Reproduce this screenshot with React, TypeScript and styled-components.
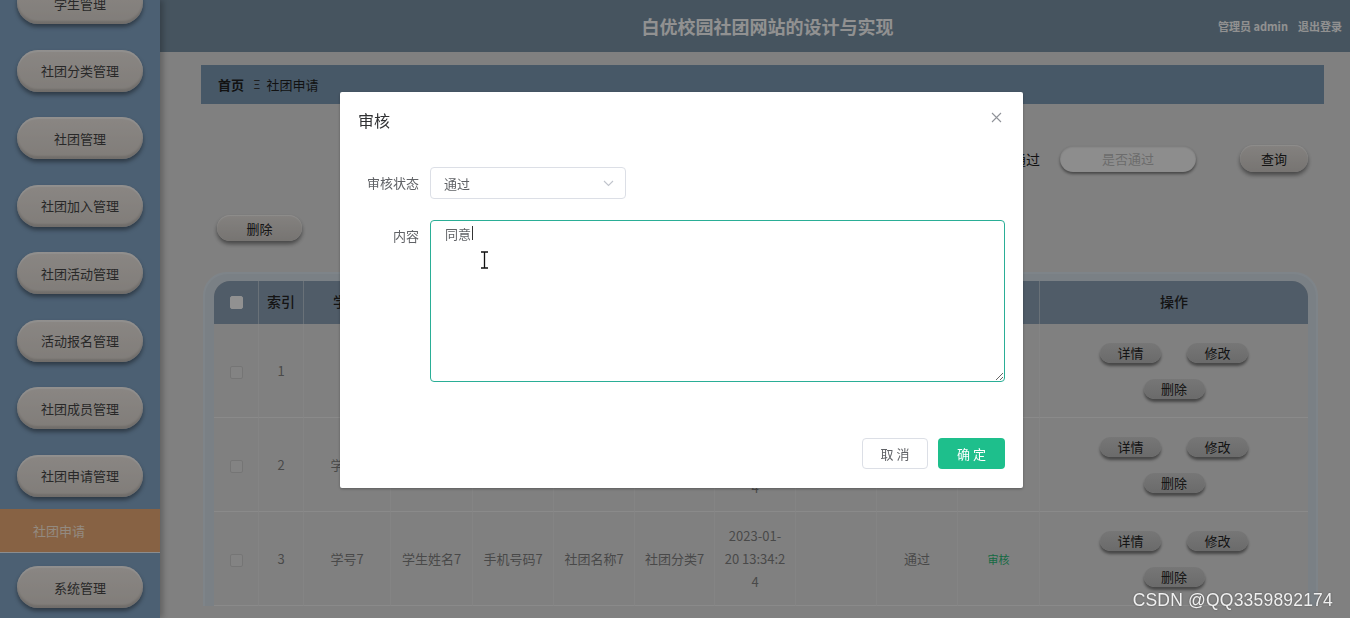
import React from "react";
import styled, { createGlobalStyle } from "styled-components";

const GlobalStyle = createGlobalStyle`
  * { box-sizing: border-box; }
  html, body { margin: 0; padding: 0; width: 100%; height: 100%; overflow: hidden; }
  body { font-family: "Noto Sans CJK SC", "Noto Sans", "Liberation Sans", sans-serif; color: #333; }
  #root { height: 100%; }
`;

const menu = ["学生管理", "社团分类管理", "社团管理", "社团加入管理", "社团活动管理", "活动报名管理", "社团成员管理", "社团申请管理"];

const rows = [
	{ id: 1, no: "11", name: "学生姓名9", phone: "手机号码9", club: "社团名称9", type: "社团分类9", status: "通过" },
	{ id: 2, no: "学号8", name: "学生姓名8", phone: "手机号码8", club: "社团名称8", type: "社团分类8", status: "通过" },
	{ id: 3, no: "学号7", name: "学生姓名7", phone: "手机号码7", club: "社团名称7", type: "社团分类7", status: "通过" },
];

const columns = ["索引", "学号", "学生姓名", "手机号码", "社团名称", "社团分类", "申请时间", "审核回复", "是否通过", "审核", "操作"];
const widths = [45, 45, 87, 82, 81, 81, 80, 81, 81, 81, 82, 268];

function App() {
	return (
		<Page>
			<GlobalStyle />
			<Sidebar>
				{/* the menu is scrolled down a little */}
				<Menu>
					{menu.map((item) => (
						<MenuItem key={item}>
							<MenuButton>{item}</MenuButton>
						</MenuItem>
					))}
					<SubItem>社团申请</SubItem>
					<MenuItem>
						<MenuButton>系统管理</MenuButton>
					</MenuItem>
				</Menu>
			</Sidebar>
			<Main>
				<Header>
					<span />
					<Title>白优校园社团网站的设计与实现</Title>
					<UserBox>
						<span>管理员 admin</span>
						<span>退出登录</span>
					</UserBox>
				</Header>
				<Content>
					<Breadcrumb>
						<b>首页</b>
						<Separator>Ξ</Separator>
						<span>社团申请</span>
					</Breadcrumb>
					<SearchRow>
						<SearchGroup>
							<SearchLabel>社团名称</SearchLabel>
							<SearchInput>社团名称</SearchInput>
						</SearchGroup>
						<SearchGroup>
							<SearchLabel>是否通过</SearchLabel>
							<SearchInput>是否通过</SearchInput>
						</SearchGroup>
						<PillButton $w={68} $h={27}>查询</PillButton>
					</SearchRow>
					<Toolbar>
						<PillButton $w={85} $h={26}>删除</PillButton>
					</Toolbar>
					<TableBox>
						<Table>
							<colgroup>
								{widths.map((w, i) => (
									<col key={i} style={{ width: w }} />
								))}
							</colgroup>
							<thead>
								<tr>
									<Th>
										<Check $filled />
									</Th>
									{columns.map((c) => (
										<Th key={c}>{c}</Th>
									))}
								</tr>
							</thead>
							<tbody>
								{rows.map((r) => (
									<tr key={r.id}>
										<Td>
											<Check />
										</Td>
										<Td>{r.id}</Td>
										<Td>{r.no}</Td>
										<Td>{r.name}</Td>
										<Td>{r.phone}</Td>
										<Td>{r.club}</Td>
										<Td>{r.type}</Td>
										<Td>
											<DateText>
												2023-01-
												<br />
												20 13:34:2
												<br />4
											</DateText>
										</Td>
										<Td />
										<Td>{r.status}</Td>
										<Td>
											<AuditLink>审核</AuditLink>
										</Td>
										<Td>
											<Ops>
												<OpLine>
													<OpButton>详情</OpButton>
													<OpButton>修改</OpButton>
												</OpLine>
												<OpButton>删除</OpButton>
											</Ops>
										</Td>
									</tr>
								))}
							</tbody>
						</Table>
					</TableBox>
				</Content>
			</Main>

			<Mask />
			<DialogWrap>
				<Dialog>
					<DialogHeader>
						<DialogTitle>审核</DialogTitle>
						<CloseButton>
							<svg width="11" height="11" viewBox="0 0 11 11">
								<path d="M1 1 L10 10 M10 1 L1 10" stroke="#909399" strokeWidth="1.1" />
							</svg>
						</CloseButton>
					</DialogHeader>
					<DialogBody>
						<FormItem $gap={21}>
							<FormLabel>审核状态</FormLabel>
							<Select>
								<span>通过</span>
								<svg width="11" height="7" viewBox="0 0 11 7">
									<path d="M1 1 L5.5 5.5 L10 1" stroke="#c0c4cc" strokeWidth="1.1" fill="none" />
								</svg>
							</Select>
						</FormItem>
						<FormItem $gap={22}>
							<FormLabel>内容</FormLabel>
							<AreaWrap>
								<TextArea defaultValue="同意" />
								<Caret />
								<Pointer width="9" height="18" viewBox="0 0 9 18">
									<path d="M1 1 H8 M4.5 1 V17 M1 17 H8" stroke="#111" strokeWidth="1.3" fill="none" />
								</Pointer>
							</AreaWrap>
						</FormItem>
					</DialogBody>
					<DialogFooter>
						<PlainButton>取 消</PlainButton>
						<PrimaryButton>确 定</PrimaryButton>
					</DialogFooter>
				</Dialog>
			</DialogWrap>
			<Watermark>CSDN @QQ3359892174</Watermark>
		</Page>
	);
}

export default App;

const Page = styled.div`
	display: flex;
	width: 100%;
	height: 100%;
	background: #d6d6d6;
`;

const Sidebar = styled.aside`
	flex: none;
	width: 160px;
	height: 100%;
	overflow: hidden;
	background: #7fa0c0;
	box-shadow: 3px 0 6px rgba(0, 0, 0, 0.25);
	position: relative;
	z-index: 1;
`;

const Menu = styled.nav`
	display: flex;
	flex-direction: column;
	margin-top: -31px;
`;

const MenuItem = styled.div`
	display: flex;
	justify-content: center;
	padding: 13px 0 12.5px;
`;

const MenuButton = styled.div`
	width: 126px;
	height: 42px;
	border-radius: 21px;
	display: flex;
	align-items: center;
	justify-content: center;
	font-size: 13px;
	color: #444;
	background: linear-gradient(#e6e0db, #d6d0ca);
	box-shadow: inset 0 2px 1px rgba(255, 255, 255, 0.5), inset 0 -3px 2px rgba(0, 0, 0, 0.12),
		0 3px 4px rgba(0, 0, 0, 0.4);
`;

const SubItem = styled.div`
	height: 44px;
	display: flex;
	align-items: center;
	padding-left: 33px;
	font-size: 13px;
	color: #f6e6d6;
	background: #e1a372;
	border-bottom: 1px solid #e8ecef;
`;

const Main = styled.div`
	flex: 1;
	min-width: 0;
	display: flex;
	flex-direction: column;
`;

const Header = styled.header`
	flex: none;
	height: 52px;
	display: grid;
	grid-template-columns: 1fr auto 1fr;
	align-items: center;
	padding: 0 8px 0 33px;
	background: #758c9e;
`;

const Title = styled.h1`
	margin: 0;
	font-size: 18px;
	font-weight: 700;
	color: #f2f2f2;
`;

const UserBox = styled.div`
	justify-self: end;
	display: flex;
	gap: 10px;
	font-size: 11px;
	font-weight: 700;
	color: #f2f2f2;
`;

const Content = styled.div`
	flex: 1;
	display: flex;
	flex-direction: column;
	padding: 13px 26px 0 41px;
`;

const Breadcrumb = styled.div`
	height: 39px;
	display: flex;
	align-items: center;
	padding-left: 17px;
	font-size: 13px;
	color: #1e1e1e;
	background: #7793ac;
`;

const Separator = styled.span`
	margin: 0 6px 0 9px;
	font-family: "DejaVu Sans", sans-serif;
	font-size: 12px;
	color: #333;
`;

const SearchRow = styled.div`
	margin-top: 41px;
	height: 27px;
	display: flex;
	align-items: center;
	justify-content: flex-end;
	gap: 44px;
	padding-right: 16px;
`;

const SearchGroup = styled.div`
	display: flex;
	align-items: center;
	gap: 20px;
`;

const SearchLabel = styled.span`
	font-size: 14px;
	color: #1e1e1e;
`;

const SearchInput = styled.div`
	width: 136px;
	height: 26px;
	border-radius: 13px;
	display: flex;
	align-items: center;
	justify-content: center;
	font-size: 13px;
	color: #b4b4b4;
	background: #ececec;
	box-shadow: inset 0 1px 2px rgba(0, 0, 0, 0.15), 0 2px 3px rgba(0, 0, 0, 0.45);
`;

const PillButton = styled.div<{ $w: number; $h: number }>`
	width: ${(p) => p.$w}px;
	height: ${(p) => p.$h}px;
	border-radius: ${(p) => p.$h / 2}px;
	display: flex;
	align-items: center;
	justify-content: center;
	font-size: 13px;
	color: #222;
	background: linear-gradient(#dcd8d4, #c6c2be);
	box-shadow: inset 0 1px 1px rgba(255, 255, 255, 0.5), 0 3px 4px rgba(0, 0, 0, 0.45);
`;

const Toolbar = styled.div`
	margin-top: 43px;
	padding-left: 16px;
	display: flex;
`;

const TableBox = styled.div`
	margin: 31px 0 0 2px;
	width: 1115px;
	padding: 7px 8px 0 9px;
	border: 2px solid #d3dde5;
	border-bottom: none;
	border-radius: 24px 24px 0 0;
	background: #ccd6de;
`;

const Table = styled.table`
	width: 1094px;
	border-collapse: separate;
	border-spacing: 0;
	table-layout: fixed;
	background: #d6d6d6;
	border-radius: 16px 16px 0 0;
`;

const Th = styled.th`
	height: 43px;
	padding: 0 0 4px;
	font-size: 14px;
	font-weight: 500;
	color: #222;
	background: #8599ad;
	border-right: 1px solid rgba(255, 255, 255, 0.35);
	&:first-child {
		border-top-left-radius: 16px;
	}
	&:last-child {
		border-top-right-radius: 16px;
		border-right: none;
	}
`;

const Td = styled.td`
	height: 94px;
	padding: 0 4px;
	text-align: center;
	font-size: 13px;
	color: #7a7a7a;
	border-right: 1px solid #dcdcdc;
	border-bottom: 1px solid #e6e6e6;
	&:last-child {
		border-right: none;
	}
`;

const Check = styled.span<{ $filled?: boolean }>`
	display: inline-block;
	vertical-align: middle;
	width: 13px;
	height: 13px;
	border-radius: 2px;
	border: 1px solid ${(p) => (p.$filled ? "#f2f2f2" : "#c4c4c4")};
	background: ${(p) => (p.$filled ? "#f2f2f2" : "#dadada")};
`;

const DateText = styled.div`
	line-height: 23px;
`;

const AuditLink = styled.span`
	font-size: 11px;
	color: #25b170;
`;

const Ops = styled.div`
	display: flex;
	flex-direction: column;
	align-items: center;
	gap: 16px;
`;

const OpLine = styled.div`
	display: flex;
	gap: 26px;
`;

const OpButton = styled.div`
	width: 61px;
	height: 20px;
	border-radius: 10px;
	display: flex;
	align-items: center;
	justify-content: center;
	font-size: 13px;
	color: #222;
	background: linear-gradient(#c6c6c6, #b2b2b2);
	box-shadow: 0 3px 3px rgba(0, 0, 0, 0.45);
`;

const Mask = styled.div`
	position: fixed;
	inset: 0;
	background: rgba(0, 0, 0, 0.4);
	z-index: 10;
`;

const DialogWrap = styled.div`
	position: fixed;
	inset: 0;
	z-index: 11;
	display: flex;
	justify-content: center;
	align-items: flex-start;
	padding: 92px 0 0 13px;
`;

const Dialog = styled.div`
	width: 683px;
	background: #fff;
	border-radius: 2px;
	box-shadow: 0 1px 3px rgba(0, 0, 0, 0.3);
`;

const DialogHeader = styled.div`
	position: relative;
	padding: 16px 18px 10px;
`;

const DialogTitle = styled.span`
	font-size: 16px;
	line-height: 24px;
	color: #303133;
`;

const CloseButton = styled.div`
	position: absolute;
	top: 20px;
	right: 21px;
	display: flex;
`;

const DialogBody = styled.div`
	padding: 25px 18px 24px 0;
`;

const FormItem = styled.div<{ $gap: number }>`
	display: flex;
	margin-bottom: ${(p) => p.$gap}px;
`;

const FormLabel = styled.label`
	flex: none;
	width: 90px;
	padding-right: 11px;
	text-align: right;
	font-size: 13px;
	line-height: 32px;
	color: #606266;
`;

const Select = styled.div`
	width: 196px;
	height: 32px;
	display: flex;
	align-items: center;
	justify-content: space-between;
	padding: 0 11px 0 13px;
	border: 1px solid #dcdfe6;
	border-radius: 4px;
	font-size: 13px;
	color: #606266;
`;

const AreaWrap = styled.div`
	position: relative;
	flex: 1;
	height: 162px;
`;

const TextArea = styled.textarea`
	display: block;
	width: 100%;
	height: 100%;
	padding: 3px 14px;
	border: 1px solid #2aae96;
	border-radius: 4px;
	outline: none;
	resize: vertical;
	font-family: "Noto Sans CJK SC", "Noto Sans", sans-serif;
	font-size: 13px;
	line-height: 1.5;
	color: #606266;
`;

const Caret = styled.span`
	position: absolute;
	left: 42px;
	top: 6px;
	width: 1px;
	height: 14px;
	background: #333;
`;

const Pointer = styled.svg`
	position: absolute;
	left: 50px;
	top: 31px;
`;

const DialogFooter = styled.div`
	display: flex;
	justify-content: flex-end;
	gap: 10px;
	padding: 10px 18px 19px;
`;

const PlainButton = styled.button`
	width: 66px;
	height: 31px;
	border: 1px solid #dcdfe6;
	border-radius: 4px;
	background: #fff;
	font-family: "Noto Sans CJK SC", sans-serif;
	font-size: 13px;
	color: #606266;
`;

const PrimaryButton = styled.button`
	width: 67px;
	height: 31px;
	border: none;
	border-radius: 4px;
	background: #1ebf8c;
	font-family: "Noto Sans CJK SC", sans-serif;
	font-size: 13px;
	color: #fff;
`;

const Watermark = styled.div`
	position: fixed;
	right: 17px;
	bottom: 7px;
	z-index: 20;
	font-family: "Liberation Sans", "Noto Sans", sans-serif;
	font-size: 17.5px;
	letter-spacing: 0.2px;
	color: rgba(255, 255, 255, 0.9);
	text-shadow: 0 0 2px rgba(0, 0, 0, 0.4);
`;
